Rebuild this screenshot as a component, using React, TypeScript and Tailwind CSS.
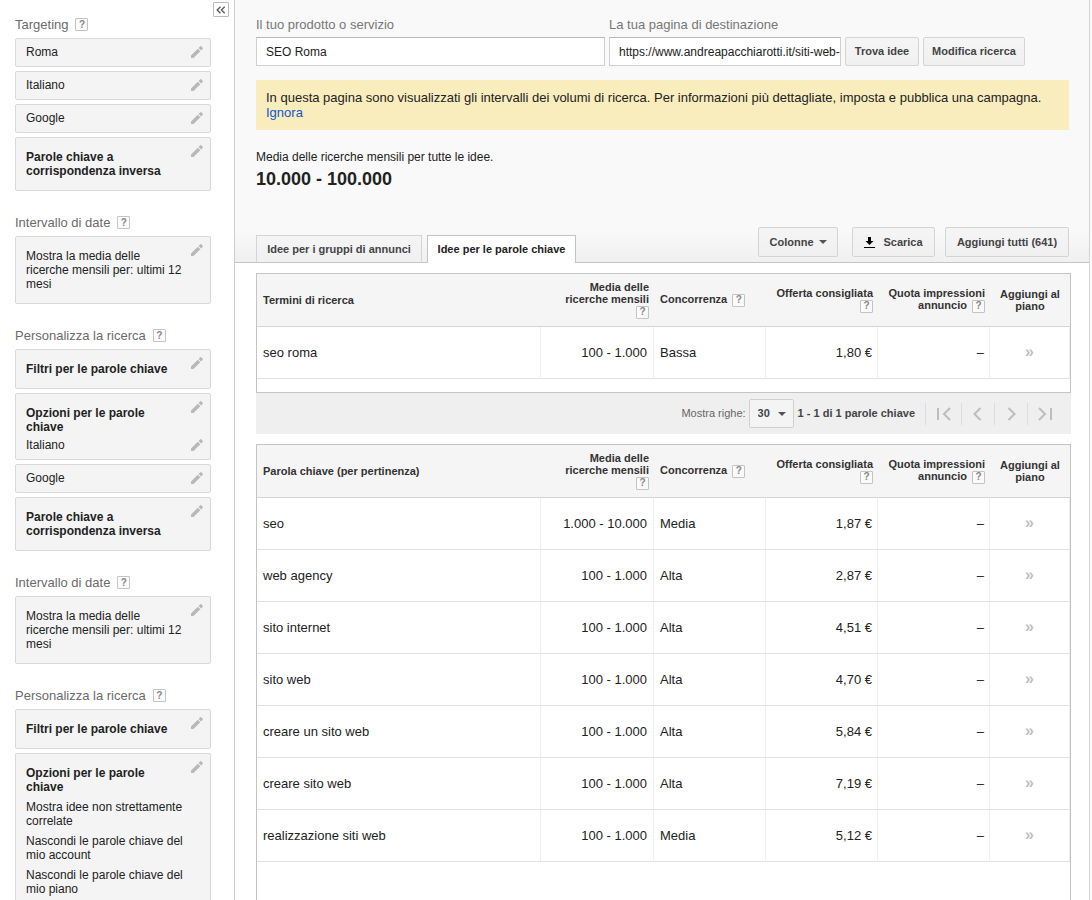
import React from "react";

function Help() {
  return (
    <button
      type="button"
      aria-label="Guida"
      className="inline-flex h-[13px] w-[13px] shrink-0 items-center justify-center rounded-[1px] border border-[#c4c4c4] bg-[#fbfbfb] align-middle text-[10px] leading-none font-bold text-[#888]"
    >
      ?
    </button>
  );
}

function Pencil() {
  return (
    <button type="button" aria-label="Modifica" className="block h-3 w-3 shrink-0 text-[#b8b8b8]">
      <svg viewBox="0 0 12 12" className="block h-3 w-3" fill="currentColor">
        <path d="M0 9.5 6.8 2.7 9.3 5.2 2.5 12H0z" />
        <path d="M7.6 1.9 9.2.3q.5-.5 1 0l1.5 1.5q.5.5 0 1L10.1 4.4z" />
      </svg>
    </button>
  );
}

function Caret() {
  return (
    <svg viewBox="0 0 8 4" className="h-1 w-2" fill="#555">
      <path d="M0 0h8L4 4z" />
    </svg>
  );
}

function Card({ children, last = false }: { children: React.ReactNode; last?: boolean }) {
  return (
    <div
      className={
        last
          ? "flex flex-1 items-start gap-[6px] rounded-t-[2px] border border-b-0 border-[#d9d9d9] bg-[#f4f4f4] pr-[7px] pl-[10px]"
          : "flex items-start gap-[6px] rounded-[2px] border border-[#d9d9d9] bg-[#f4f4f4] pr-[7px] pl-[10px]"
      }
    >
      {children}
    </div>
  );
}

function Simple({ text }: { text: string }) {
  return (
    <Card>
      <div className="min-w-0 flex-1 pt-[6px] pb-[7px]">{text}</div>
      <div className="pt-[7px]">
        <Pencil />
      </div>
    </Card>
  );
}

function Block({ text, bold = false }: { text: string; bold?: boolean }) {
  return (
    <Card>
      <div className={bold ? "min-w-0 flex-1 py-3 font-bold" : "min-w-0 flex-1 py-3"}>{text}</div>
      <div className="pt-[7px]">
        <Pencil />
      </div>
    </Card>
  );
}

function Section({ title, children, grow = false }: { title: string; children: React.ReactNode; grow?: boolean }) {
  return (
    <section className={grow ? "flex flex-1 flex-col" : "flex flex-col"}>
      <h2 className="mb-[5px] flex h-[17px] items-center gap-[7px] text-[13px] text-[#6b6b6b]">
        {title} <Help />
      </h2>
      <div className="flex flex-1 flex-col gap-1">{children}</div>
    </section>
  );
}

function Sidebar() {
  return (
    <aside className="flex w-[235px] shrink-0 items-stretch border-r border-[#ccc] bg-white pl-[15px]">
      <div className="flex flex-1 flex-col gap-[23px] pt-4 text-[12px] leading-[14px]">
        <Section title="Targeting">
          <Simple text="Roma" />
          <Simple text="Italiano" />
          <Simple text="Google" />
          <Block bold text="Parole chiave a corrispondenza inversa" />
        </Section>
        <Section title="Intervallo di date">
          <Block text="Mostra la media delle ricerche mensili per: ultimi 12 mesi" />
        </Section>
        <Section title="Personalizza la ricerca">
          <Block bold text="Filtri per le parole chiave" />
          <Card>
            <div className="min-w-0 flex-1 pt-3 pb-[7px]">
              <div className="font-bold">Opzioni per le parole chiave</div>
              <div className="pt-1">Italiano</div>
            </div>
            <div className="flex flex-col justify-between self-stretch pt-[7px] pb-2">
              <Pencil />
              <Pencil />
            </div>
          </Card>
          <Simple text="Google" />
          <Block bold text="Parole chiave a corrispondenza inversa" />
        </Section>
        <Section title="Intervallo di date">
          <Block text="Mostra la media delle ricerche mensili per: ultimi 12 mesi" />
        </Section>
        <Section title="Personalizza la ricerca" grow>
          <Block bold text="Filtri per le parole chiave" />
          <Card last>
            <div className="flex min-w-0 flex-1 flex-col gap-[6px] pt-3">
              <div className="font-bold">Opzioni per le parole chiave</div>
              <div>Mostra idee non strettamente correlate</div>
              <div>Nascondi le parole chiave del mio account</div>
              <div>Nascondi le parole chiave del mio piano</div>
            </div>
            <div className="pt-[7px]">
              <Pencil />
            </div>
          </Card>
        </Section>
      </div>
      <button
        type="button"
        aria-label="Comprimi"
        className="mt-[2px] mr-[5px] ml-[2px] flex h-[15px] w-4 items-center justify-center rounded-[1px] border border-[#bbb] bg-white"
      >
        <svg viewBox="0 0 10 8" className="h-2 w-[10px]" fill="none" stroke="#555" strokeWidth="1.3">
          <path d="M4.5.7 1.2 4l3.3 3.3M8.7.7 5.4 4l3.3 3.3" />
        </svg>
      </button>
    </aside>
  );
}

const buttonClass =
  "flex shrink-0 items-center justify-center rounded-[2px] border border-[#d4d4d4] bg-linear-to-b from-[#f5f5f5] to-[#f0f0f0] text-[11px] font-bold whitespace-nowrap text-[#444]";

function Button({ size, children }: { size: string; children: React.ReactNode }) {
  return (
    <button type="button" className={`${buttonClass} ${size}`}>
      {children}
    </button>
  );
}

const inputClass =
  "block h-[29px] w-full border border-[#d0d0d0] border-t-[#b9b9b9] bg-white pl-[9px] text-[12px] text-[#222] outline-none";

type Row = [string, string, string, string];

function KeywordTable({ title, rows, grow = false }: { title: string; rows: Row[]; grow?: boolean }) {
  return (
    <div
      className={
        grow
          ? "flex-1 border border-b-0 border-[#c4c4c4] bg-white"
          : "border border-[#c4c4c4] bg-white pb-[13px]"
      }
    >
      <table className="w-full table-fixed border-separate border-spacing-0">
        <colgroup>
          <col />
          <col className="w-[113px]" />
          <col className="w-[112px]" />
          <col className="w-[112px]" />
          <col className="w-[112px]" />
          <col className="w-[80px]" />
        </colgroup>
        <thead className="bg-[#f5f5f5] text-[11px] leading-3 text-[#333] [&_th]:h-[53px] [&_th]:border-b [&_th]:border-[#d4d4d4] [&_th]:align-middle">
          <tr>
            <th className="pl-[6px] text-left">{title}</th>
            <th className="pr-[5px] text-right">
              Media delle
              <br />
              ricerche mensili
              <br />
              <Help />
            </th>
            <th className="pl-[6px] text-left whitespace-nowrap">
              Concorrenza <span className="pl-[2px]"><Help /></span>
            </th>
            <th className="pr-[5px] text-right whitespace-nowrap">
              Offerta consigliata
              <br />
              <Help />
            </th>
            <th className="pr-[5px] text-right whitespace-nowrap">
              Quota impressioni
              <br />
              annuncio <span className="pl-[2px]"><Help /></span>
            </th>
            <th className="text-center whitespace-nowrap">
              Aggiungi al
              <br />
              piano
            </th>
          </tr>
        </thead>
        <tbody className="text-[13px] [&_td]:h-[52px] [&_td]:border-r [&_td]:border-b [&_td]:border-r-[#eee] [&_td]:border-b-[#e2e2e2]">
          {rows.map(([term, volume, competition, bid]) => (
            <tr key={term}>
              <td className="pl-[6px]">{term}</td>
              <td className="pr-[6px] text-right">{volume}</td>
              <td className="pl-[6px]">{competition}</td>
              <td className="pr-[5px] text-right">{bid}</td>
              <td className="pr-[5px] text-right">–</td>
              <td className="text-center">
                <button type="button" aria-label="Aggiungi al piano" className="text-[16px] leading-4 font-bold text-[#c0c0c0]">
                  »
                </button>
              </td>
            </tr>
          ))}
        </tbody>
      </table>
    </div>
  );
}

function PageButton({ label, size, d }: { label: string; size: string; d: string }) {
  return (
    <button
      type="button"
      aria-label={label}
      className={`flex h-[22px] items-center justify-center border-l border-[#ddd] ${size}`}
    >
      <svg viewBox="0 0 14 14" className="h-[14px] w-[14px]" fill="none" stroke="#bdbdbd" strokeWidth="2">
        <path d={d} />
      </svg>
    </button>
  );
}

const rows: Row[] = [
  ["seo", "1.000 - 10.000", "Media", "1,87 €"],
  ["web agency", "100 - 1.000", "Alta", "2,87 €"],
  ["sito internet", "100 - 1.000", "Alta", "4,51 €"],
  ["sito web", "100 - 1.000", "Alta", "4,70 €"],
  ["creare un sito web", "100 - 1.000", "Alta", "5,84 €"],
  ["creare sito web", "100 - 1.000", "Alta", "7,19 €"],
  ["realizzazione siti web", "100 - 1.000", "Media", "5,12 €"],
];

export default function App() {
  return (
    <div className="flex min-h-screen bg-[#fafafa] pr-[2px] font-['Liberation_Sans',Arial,sans-serif] text-[#222]">
      <Sidebar />
      <main className="flex min-w-0 flex-1 flex-col border-r border-[#d4d4d4] bg-white">
        <header className="border-b border-[#c4c4c4] bg-linear-to-b from-[#f9f9f9] from-88% to-[#f0f0f0] pr-5 pl-[21px]">
          <form className="flex items-end gap-1 pt-[17px]" onSubmit={(e) => e.preventDefault()}>
            <div className="min-w-0 flex-1">
              <label htmlFor="product" className="mb-[5px] block text-[13px] leading-[15px] text-[#777]">
                Il tuo prodotto o servizio
              </label>
              <input id="product" className={inputClass} defaultValue="SEO Roma" />
            </div>
            <div className="w-[232px] shrink-0">
              <label htmlFor="landing" className="mb-[5px] block text-[13px] leading-[15px] text-[#777]">
                La tua pagina di destinazione
              </label>
              <input id="landing" className={inputClass} defaultValue="https://www.andreapacchiarotti.it/siti-web-" />
            </div>
            <Button size="h-[29px] w-[74px]">Trova idee</Button>
            <Button size="mr-[44px] h-[29px] w-[102px]">Modifica ricerca</Button>
          </form>
          <div className="mt-[14px] bg-[#f9edbe] p-[10px] text-[13px] leading-[15px]">
            In questa pagina sono visualizzati gli intervalli dei volumi di ricerca. Per informazioni più dettagliate,
            imposta e pubblica una campagna.
            <br />
            <a href="#ignora" className="text-[#15c]">
              Ignora
            </a>
          </div>
          <p className="mt-5 text-[12px] leading-[14px]">Media delle ricerche mensili per tutte le idee.</p>
          <p className="mt-[5px] text-[18px] leading-5 font-bold">10.000 - 100.000</p>
          <div className="mt-[38px] flex h-[35px] items-end justify-between">
            <nav className="flex items-end gap-[5px] text-[11px] font-bold">
              <button
                type="button"
                className="h-[27px] w-[166px] border border-b-0 border-[#d4d4d4] bg-linear-to-b from-[#f5f5f5] to-[#f0f0f0] whitespace-nowrap text-[#444]"
              >
                Idee per i gruppi di annunci
              </button>
              <button
                type="button"
                className="-mb-px h-[28px] w-[149px] border border-b-0 border-[#c4c4c4] bg-white whitespace-nowrap text-[#222]"
              >
                Idee per le parole chiave
              </button>
            </nav>
            <div className="flex self-start">
              <Button size="mr-[14px] h-[30px] w-[80px] gap-[5px]">
                Colonne <Caret />
              </Button>
              <Button size="mr-[10px] h-[30px] w-[83px] gap-2">
                <svg viewBox="0 0 11 11" className="h-[11px] w-[11px]" fill="#000">
                  <path d="M4 0h3v4h2.5l-4 4-4-4H4zM0 10h11v1H0z" />
                </svg>
                Scarica
              </Button>
              <Button size="h-[30px] w-[124px]">Aggiungi tutti (641)</Button>
            </div>
          </div>
        </header>

        <div className="flex flex-1 flex-col pt-[10px] pr-[18px] pl-[21px]">
          <KeywordTable title="Termini di ricerca" rows={[["seo roma", "100 - 1.000", "Bassa", "1,80 €"]]} />
          <div className="mb-[10px] flex h-[41px] items-center justify-end bg-[#efefef] pr-[10px] text-[11px] font-bold">
            <label htmlFor="rows" className="mr-[3px] font-normal text-[#666]">
              Mostra righe:
            </label>
            <div className="relative mr-1">
              <select
                id="rows"
                defaultValue="30"
                className="block h-[29px] w-[45px] appearance-none rounded-[2px] border border-[#d0d0d0] bg-[#f4f4f4] pl-2 text-[11px] font-bold text-[#444]"
              >
                <option>30</option>
                <option>50</option>
                <option>100</option>
              </select>
              <span className="pointer-events-none absolute inset-y-0 right-2 flex items-center">
                <Caret />
              </span>
            </div>
            <span className="mr-[10px] text-[#444]">1 - 1 di 1 parole chiave</span>
            <PageButton label="Prima pagina" size="w-[36px]" d="M1 1v12M13 1 7 7l6 6" />
            <PageButton label="Pagina precedente" size="w-[33px]" d="M9.500 1l-6 6 6 6" />
            <PageButton label="Pagina successiva" size="w-[33px]" d="M4.500 1l6 6-6 6" />
            <PageButton label="Ultima pagina" size="w-[34px]" d="M1 1l6 6-6 6M13 1v12" />
          </div>
          <KeywordTable grow title="Parola chiave (per pertinenza)" rows={rows} />
        </div>
      </main>
    </div>
  );
}
